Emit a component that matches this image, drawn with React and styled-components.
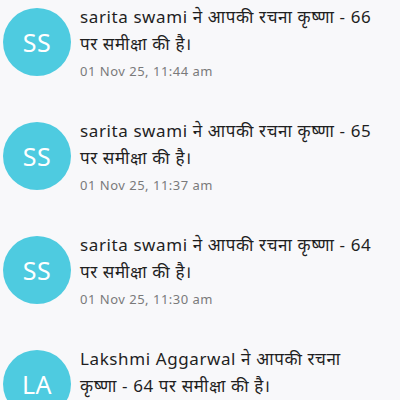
import React from "react";
import styled, { createGlobalStyle } from "styled-components";

const GlobalStyle = createGlobalStyle`
  body {
    margin: 0;
    background: #f8f8fa;
    font-family: "Noto Sans", "Noto Sans Devanagari", "Open Sans", sans-serif;
  }
`;

const List = styled.div`
  display: flex;
  flex-direction: column;
  width: 400px;
`;

const Row = styled.div`
  display: flex;
  align-items: flex-start;
  height: 114px;
`;

const Avatar = styled.div`
  flex: none;
  width: 68px;
  height: 68px;
  margin: 8px 0 0 3px;
  border-radius: 50%;
  background: #4ecbe0;
  color: #fff;
  display: flex;
  align-items: center;
  justify-content: center;
  font-size: 25px;
  letter-spacing: 0.5px;
`;

const Body = styled.div`
  flex: 1;
  margin-left: 9px;
  padding: 3px 22px 0 0;
`;

const Message = styled.div`
  font-size: 17px;
  line-height: 27px;
  letter-spacing: 0.6px;
  color: #1f1f1f;
`;

const Time = styled.div`
  margin-top: 5px;
  font-size: 13px;
  line-height: 18px;
  letter-spacing: 0.5px;
  color: #7a7a7a;
`;

const notifications = [
  { initials: "SS", name: "sarita swami", work: "कृष्णा - 66", time: "01 Nov 25, 11:44 am" },
  { initials: "SS", name: "sarita swami", work: "कृष्णा - 65", time: "01 Nov 25, 11:37 am" },
  { initials: "SS", name: "sarita swami", work: "कृष्णा - 64", time: "01 Nov 25, 11:30 am" },
  { initials: "LA", name: "Lakshmi Aggarwal", work: "कृष्णा - 64", time: "01 Nov 25, 11:24 am" },
];

export default function App() {
  return (
    <>
      <GlobalStyle />
      <List>
        {notifications.map((n, i) => (
          <Row key={i}>
            <Avatar>{n.initials}</Avatar>
            <Body>
              <Message>
                {n.name} ने आपकी रचना {n.work} पर समीक्षा की है।
              </Message>
              <Time>{n.time}</Time>
            </Body>
          </Row>
        ))}
      </List>
    </>
  );
}
